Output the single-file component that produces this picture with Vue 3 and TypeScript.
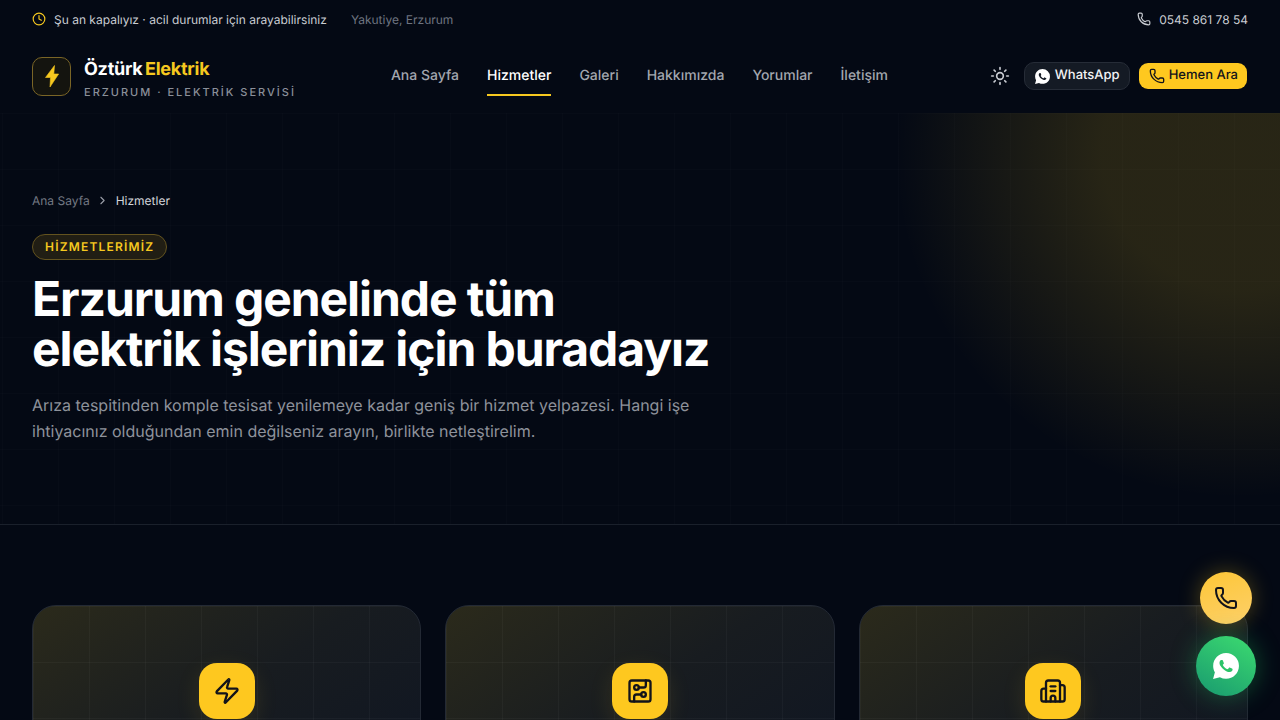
<script setup lang="ts">
const navLinks = ['Ana Sayfa', 'Hizmetler', 'Galeri', 'Hakkımızda', 'Yorumlar', 'İletişim']
const phonePath = 'M13.832 16.568a1 1 0 0 0 1.213-.303l.355-.465A2 2 0 0 1 17 15h3a2 2 0 0 1 2 2v3a2 2 0 0 1-2 2A18 18 0 0 1 2 4a2 2 0 0 1 2-2h3a2 2 0 0 1 2 2v3a2 2 0 0 1-.8 1.6l-.468.351a1 1 0 0 0-.292 1.233 14 14 0 0 0 6.392 6.384'
const waBubble = 'M20.464 3.488A11.815 11.815 0 0 0 12.05 0C5.495 0 .16 5.335.157 11.892c0 2.096.547 4.142 1.588 5.945L.057 24l6.305-1.654a11.882 11.882 0 0 0 5.683 1.448h.005c6.554 0 11.89-5.335 11.893-11.893a11.821 11.821 0 0 0-3.48-8.413z'
const waPhone = 'M17.472 14.382c-.297-.149-1.758-.867-2.03-.967-.273-.099-.471-.148-.67.15-.197.297-.767.966-.94 1.164-.173.199-.347.223-.644.075-.297-.15-1.255-.463-2.39-1.475-.883-.788-1.48-1.761-1.653-2.059-.173-.297-.018-.458.13-.606.134-.133.298-.347.446-.52.149-.174.198-.298.298-.497.099-.198.05-.371-.025-.52-.075-.149-.669-1.612-.916-2.207-.242-.579-.487-.5-.669-.51-.173-.008-.371-.01-.57-.01-.198 0-.52.074-.792.372-.272.297-1.04 1.016-1.04 2.479 0 1.462 1.065 2.875 1.213 3.074.149.198 2.096 3.2 5.077 4.487.709.306 1.262.489 1.694.625.712.227 1.36.195 1.871.118.571-.085 1.758-.719 2.006-1.413.248-.694.248-1.289.173-1.413-.074-.124-.272-.198-.57-.347z'
const sunRays = ['M12 2v2', 'M12 20v2', 'm4.93 4.93 1.41 1.41', 'm17.66 17.66 1.41 1.41', 'M2 12h2', 'M20 12h2', 'm6.34 17.66-1.41 1.41', 'm19.07 4.93-1.41 1.41']
const cards = [
  { id: 'zap', paths: ['M4 14a1 1 0 0 1-.78-1.63l9.9-10.2a.5.5 0 0 1 .86.46l-1.92 6.02A1 1 0 0 0 13 10h7a1 1 0 0 1 .78 1.63l-9.9 10.2a.5.5 0 0 1-.86-.46l1.92-6.02A1 1 0 0 0 11 14z'] },
  { id: 'board', paths: ['M5 3h14a2 2 0 0 1 2 2v14a2 2 0 0 1-2 2H5a2 2 0 0 1-2-2V5a2 2 0 0 1 2-2z', 'M11 9h4a2 2 0 0 0 2-2V3', 'M11 9a2 2 0 1 1-4 0 2 2 0 0 1 4 0z', 'M7 21v-4a2 2 0 0 1 2-2h4', 'M17 15a2 2 0 1 1-4 0 2 2 0 0 1 4 0z'] },
  { id: 'building', paths: ['M10 12h4', 'M10 8h4', 'M14 21v-3a2 2 0 0 0-4 0v3', 'M6 10H4a2 2 0 0 0-2 2v7a2 2 0 0 0 2 2h16a2 2 0 0 0 2-2V9a2 2 0 0 0-2-2h-2', 'M6 21V5a2 2 0 0 1 2-2h8a2 2 0 0 1 2 2v16'] },
]
</script>

<template>
  <div class="page">
    <div class="topbar">
      <div class="top-left">
        <span class="status">
          <svg class="clock" viewBox="0 0 24 24" width="14" height="14"><circle cx="12" cy="12" r="10" /><path d="M12 6v6l4 2" /></svg>
          Şu an kapalıyız · acil durumlar için arayabilirsiniz
        </span>
        <span class="place">Yakutiye, Erzurum</span>
      </div>
      <span class="top-phone">
        <svg class="line" viewBox="0 0 24 24" width="14" height="14"><path :d="phonePath" /></svg>
        0545 861 78 54
      </span>
    </div>

    <header class="header">
      <div class="brand">
        <div class="logo">
          <svg viewBox="0 0 24 24" width="24" height="24"><polygon points="14.5,1.5 5.5,13.5 10.5,13.5 10,23 18.6,10 13.8,10" fill="#f6c81f" stroke="#f6c81f" stroke-width="0.6" stroke-linejoin="round" /></svg>
        </div>
        <div class="brand-text">
          <div class="brand-name">Öztürk <span>Elektrik</span></div>
          <div class="brand-sub">ERZURUM · ELEKTRİK SERVİSİ</div>
        </div>
      </div>

      <nav class="nav">
        <a v-for="link in navLinks" :key="link" :class="{ active: link === 'Hizmetler' }">{{ link }}</a>
      </nav>

      <div class="actions">
        <button class="theme">
          <svg class="line" viewBox="0 0 24 24" width="20" height="20"><circle cx="12" cy="12" r="4" /><path v-for="r in sunRays" :key="r" :d="r" /></svg>
        </button>
        <button class="btn-wa">
          <svg viewBox="0 0 24 24" width="15" height="15"><path fill="#fff" :d="waBubble" /><path fill="#141a24" :d="waPhone" /></svg>
          <span>WhatsApp</span>
        </button>
        <button class="btn-call">
          <svg class="line" viewBox="0 0 24 24" width="16" height="16"><path :d="phonePath" /></svg>
          <span>Hemen Ara</span>
        </button>
      </div>
    </header>

    <section class="hero">
      <div class="crumbs">
        <span>Ana Sayfa</span>
        <svg class="line" viewBox="0 0 24 24" width="13" height="13"><path d="m9 18 6-6-6-6" /></svg>
        <span class="current">Hizmetler</span>
      </div>
      <div class="badge">HİZMETLERİMİZ</div>
      <h1>Erzurum genelinde tüm<br />elektrik işleriniz için buradayız</h1>
      <p>Arıza tespitinden komple tesisat yenilemeye kadar geniş bir hizmet yelpazesi. Hangi işe ihtiyacınız olduğundan emin değilseniz arayın, birlikte netleştirelim.</p>
    </section>

    <section class="services">
      <article v-for="card in cards" :key="card.id" class="card">
        <div class="card-icon">
          <svg class="line" viewBox="0 0 24 24" width="28" height="28"><path v-for="d in card.paths" :key="d" :d="d" /></svg>
        </div>
      </article>
    </section>

    <div class="fabs">
      <button class="fab-call">
        <svg class="line" viewBox="0 0 24 24" width="24" height="24"><path :d="phonePath" /></svg>
      </button>
      <button class="fab-wa">
        <svg viewBox="0 0 24 24" width="26" height="26"><path fill="#fff" :d="waBubble" /><path fill="#2cc469" :d="waPhone" /></svg>
      </button>
    </div>
  </div>
</template>

<style>
html, body { background: #040914; }
</style>

<style scoped>
.page { position: relative; height: 720px; overflow: hidden; background: #040914; color: #fff; font-family: Inter, "Liberation Sans", sans-serif; text-rendering: geometricPrecision; }
svg { display: block; flex: none; }
.line, .clock { fill: none; stroke: currentColor; stroke-width: 2; stroke-linecap: round; stroke-linejoin: round; }
.clock { color: #f6c81f; }

.topbar { display: flex; justify-content: space-between; align-items: center; height: 38px; padding: 0 32px; font-size: 12px; color: #c9ccd2; }
.top-left { display: flex; align-items: center; gap: 24px; }
.status, .top-phone { display: flex; align-items: center; gap: 8px; }
.place { color: #6e7480; }

.header { display: flex; justify-content: space-between; align-items: center; height: 75px; padding: 0 32px; }
.brand { display: flex; align-items: center; gap: 13px; width: 265px; margin-top: 1px; }
.logo { display: flex; flex: none; align-items: center; justify-content: center; width: 39px; height: 39px; box-sizing: border-box; border: 1px solid #7a6526; border-radius: 10px; background: #14140f; }
.brand-text { margin-top: 5px; }
.brand-name { font-size: 18px; line-height: 22px; font-weight: 700; letter-spacing: -0.25px; word-spacing: -1.5px; white-space: pre; }
.brand-name span { color: #f6c81f; }
.brand-sub { margin-top: 4px; font-size: 11px; line-height: 14px; font-weight: 500; letter-spacing: 2px; color: #8b909a; white-space: nowrap; }

.nav { display: flex; gap: 28px; font-size: 14px; font-weight: 500; color: #a2a6ae; }
.nav a { padding: 11px 0 8px; border-bottom: 2px solid transparent; line-height: 20px; }
.nav a.active { color: #fff; border-bottom-color: #f6c81f; }

.actions { display: flex; align-items: center; gap: 9px; margin: 1px 1px 0 0; }
.theme { display: flex; align-items: center; justify-content: center; width: 36px; height: 36px; margin-right: -3px; padding: 0; border: 0; background: none; color: #c9ccd2; }
button { font-family: inherit; text-rendering: inherit; }
.btn-wa span, .btn-call span { position: relative; top: -1px; }
.btn-wa { display: flex; align-items: center; gap: 5px; height: 28px; padding: 0 9px 0 10px; border: 1px solid #262c37; border-radius: 10px; background: #141a24; color: #f1f2f4; font-size: 13px; font-weight: 500; }
.btn-call { display: flex; align-items: center; gap: 4px; height: 26px; padding: 0 9px 0 10px; border: 0; border-radius: 9px; background: #fec81f; color: #12131a; font-size: 13px; font-weight: 500; }

.hero { height: 412px; box-sizing: border-box; padding: 79px 32px 0; border-bottom: 1px solid #1a202b;
  background:
    radial-gradient(circle 345px at 1240px 40px, rgba(246, 200, 31, 0.15) 0, rgba(246, 200, 31, 0.145) 40%, rgba(246, 200, 31, 0.07) 72%, rgba(246, 200, 31, 0) 100%) 0 0 / 100% 100% no-repeat,
    linear-gradient(to right, rgba(255, 255, 255, 0.012) 1px, transparent 1px) 2px 0 / 56px 56px,
    linear-gradient(to bottom, rgba(255, 255, 255, 0.012) 1px, transparent 1px) 0 0 / 56px 56px; }
.crumbs { display: flex; align-items: center; gap: 6.5px; height: 16px; font-size: 12px; color: #737883; }
.crumbs svg { color: #9a9ea7; }
.crumbs .current { color: #d2d4d9; }
.badge { display: inline-block; margin-top: 26px; padding: 0 12px; height: 26px; box-sizing: border-box; border: 1px solid #63531f; border-radius: 13px; background: #211e14; color: #f6c81f; font-size: 12px; line-height: 24px; font-weight: 600; letter-spacing: 1.2px; }
h1 { margin: 14px 0 0; font-size: 48px; line-height: 50px; font-weight: 700; letter-spacing: -1.08px; color: #fff; }
p { margin: 18px 0 0; width: 680px; font-size: 16px; line-height: 26px; color: #8e929b; }

.services { display: grid; grid-template-columns: repeat(3, 1fr); gap: 24px; padding: 80px 32px 0; }
.card { height: 300px; box-sizing: border-box; padding-top: 57px; border: 1px solid #232934; border-radius: 24px; display: flex; justify-content: center;
  background:
    linear-gradient(to right, rgba(255, 255, 255, 0.03) 1px, transparent 1px) 0 0 / 56px 56px,
    linear-gradient(to bottom, rgba(255, 255, 255, 0.03) 1px, transparent 1px) 0 0 / 56px 56px,
    linear-gradient(145deg, #2b2a1b 0, #181c20 40%, #111722 70%); }
.card-icon { display: flex; align-items: center; justify-content: center; width: 56px; height: 56px; border-radius: 18px; background: #fec81f; color: #12131a; box-shadow: 0 8px 24px rgba(250, 195, 29, 0.12); }

.fabs { position: fixed; right: 24px; bottom: 24px; display: flex; flex-direction: column; align-items: center; gap: 12px; }
.fabs button { display: flex; align-items: center; justify-content: center; padding: 0; border: 0; border-radius: 50%; }
.fab-call { width: 52px; height: 52px; background: linear-gradient(160deg, #fdc636, #fdd06a); color: #12131a; box-shadow: 0 0 22px rgba(250, 195, 29, 0.3); }
.fab-wa { width: 60px; height: 60px; background: linear-gradient(30deg, #18996f, #3ddc70); box-shadow: 0 0 26px rgba(37, 211, 102, 0.35); }
</style>
